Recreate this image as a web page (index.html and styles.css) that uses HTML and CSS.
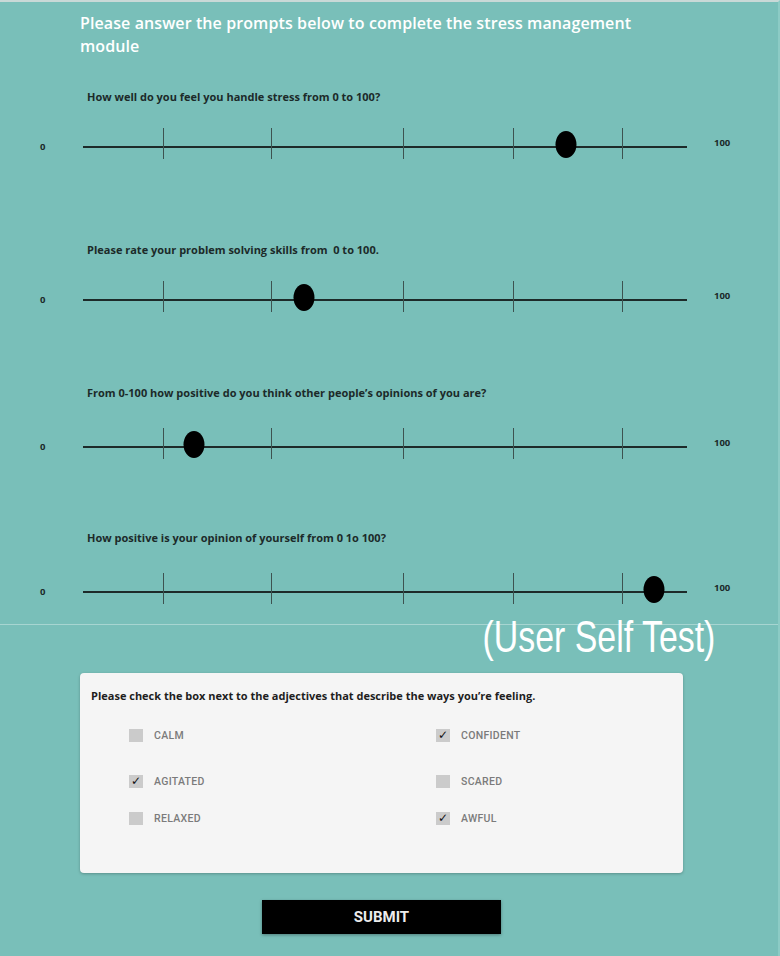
FILE: index.html
```html
<!DOCTYPE html>
<html lang="en">
<head>
<meta charset="utf-8">
<title>Stress Management Module</title>
<link rel="stylesheet" href="styles.css">
</head>
<body>
<main class="page">
  <h1 class="intro">Please answer the prompts below to complete the stress management module</h1>

  <section class="question q1">
    <p class="prompt">How well do you feel you handle stress from 0 to 100?</p>
    <div class="scale">
      <span class="min">0</span>
      <div class="track">
        <span class="tick t1"></span><span class="tick t2"></span><span class="tick t3"></span><span class="tick t4"></span><span class="tick t5"></span>
        <span class="thumb" style="left: 80%"></span>
      </div>
      <span class="max">100</span>
    </div>
  </section>

  <section class="question q2">
    <p class="prompt">Please rate your problem solving skills from &nbsp;0 to 100.</p>
    <div class="scale">
      <span class="min">0</span>
      <div class="track">
        <span class="tick t1"></span><span class="tick t2"></span><span class="tick t3"></span><span class="tick t4"></span><span class="tick t5"></span>
        <span class="thumb" style="left: 36.6%"></span>
      </div>
      <span class="max">100</span>
    </div>
  </section>

  <section class="question q3">
    <p class="prompt">From 0-100 how positive do you think other people’s opinions of you are?</p>
    <div class="scale">
      <span class="min">0</span>
      <div class="track">
        <span class="tick t1"></span><span class="tick t2"></span><span class="tick t3"></span><span class="tick t4"></span><span class="tick t5"></span>
        <span class="thumb" style="left: 18.4%"></span>
      </div>
      <span class="max">100</span>
    </div>
  </section>

  <section class="question q4">
    <p class="prompt">How positive is your opinion of yourself from 0 1o 100?</p>
    <div class="scale">
      <span class="min">0</span>
      <div class="track">
        <span class="tick t1"></span><span class="tick t2"></span><span class="tick t3"></span><span class="tick t4"></span><span class="tick t5"></span>
        <span class="thumb" style="left: 94.5%"></span>
      </div>
      <span class="max">100</span>
    </div>
  </section>

  <section class="lower">
    <div class="selftest"><span class="selftest-text">(User Self Test)</span></div>

    <div class="card">
      <p class="card-title">Please check the box next to the adjectives that describe the ways you’re feeling.</p>
      <div class="options">
        <div class="option"><span class="box"></span><span class="label">CALM</span></div>
        <div class="option"><span class="box checked">✓</span><span class="label">CONFIDENT</span></div>
        <div class="option"><span class="box checked">✓</span><span class="label">AGITATED</span></div>
        <div class="option"><span class="box"></span><span class="label">SCARED</span></div>
        <div class="option"><span class="box"></span><span class="label">RELAXED</span></div>
        <div class="option"><span class="box checked">✓</span><span class="label">AWFUL</span></div>
      </div>
    </div>

    <button class="submit" type="button">SUBMIT</button>
  </section>
</main>
</body>
</html>
```

FILE: styles.css
```css
html, body {
  margin: 0;
  padding: 0;
}

body {
  background: #79bfb9;
  border-top: 2px solid #c9d9d7;
  border-right: 2px solid #8ccbc5;
  box-sizing: border-box;
  height: 956px;
  overflow: hidden;
  font-family: "Open Sans", "Liberation Sans", sans-serif;
}

.page {
  padding-top: 10px;
}

.intro {
  margin: 0 0 0 80px;
  width: 560px;
  color: #ffffff;
  font-size: 16px;
  font-weight: 600;
  line-height: 23px;
  letter-spacing: 0.1px;
}

.question {
  margin: 0;
}

.prompt {
  margin: 0;
  padding-left: 87px;
  font-size: 11px;
  font-weight: 700;
  line-height: 14px;
  color: #1c2a29;
  letter-spacing: 0;
}

.q1 { margin-top: 32px; }
.q2 { margin-top: 79px; }
.q3 { margin-top: 69px; }
.q4 { margin-top: 67px; }

.q1 .scale, .q2 .scale { margin-top: 24px; }
.q3 .scale, .q4 .scale { margin-top: 28px; }

.scale {
  display: flex;
  align-items: center;
  height: 36px;
}

.min {
  box-sizing: border-box;
  width: 83px;
  padding-left: 40px;
  font-size: 9.5px;
  font-weight: 700;
  color: #1c2a29;
}

.max {
  margin-left: 27px;
  margin-bottom: 7px;
  font-size: 9.5px;
  font-weight: 700;
  color: #1c2a29;
}

.track {
  position: relative;
  width: 604px;
  height: 36px;
}

.track::before {
  content: "";
  position: absolute;
  left: 0;
  right: 0;
  top: 18px;
  height: 2px;
  background: #1d2a29;
}

.tick {
  position: absolute;
  top: 0;
  width: 1px;
  height: 31px;
  background: #3d5250;
}

.t1 { left: 80px; }
.t2 { left: 188px; }
.t3 { left: 320px; }
.t4 { left: 430px; }
.t5 { left: 539px; }

.thumb {
  position: absolute;
  top: 3px;
  width: 21px;
  height: 27px;
  border-radius: 50%;
  background: #000;
  transform: translateX(-50%);
}

.lower {
  margin-top: 15px;
  border-top: 1px solid rgba(255, 255, 255, 0.35);
}

.selftest {
  display: flex;
  justify-content: flex-end;
  padding-right: 63px;
  margin-top: -13px;
  height: 61px;
}

.selftest-text {
  display: inline-block;
  height: 50px;
  font-family: "Liberation Sans", "DejaVu Sans", sans-serif;
  font-size: 44px;
  line-height: 50px;
  color: #ffffff;
  transform: scaleX(0.77);
  transform-origin: right center;
  white-space: nowrap;
}

.card {
  box-sizing: border-box;
  margin: 0 0 0 80px;
  width: 603px;
  height: 200px;
  padding: 16px 11px 0;
  background: #f5f5f5;
  border-radius: 4px;
  box-shadow: 0 1px 3px rgba(0, 0, 0, 0.25);
}

.card-title {
  margin: 0;
  font-size: 11px;
  font-weight: 700;
  line-height: 14px;
  color: #1e1e1e;
  letter-spacing: 0;
}

.options {
  display: grid;
  grid-template-columns: 307px 1fr;
  grid-template-rows: 46px 37px 14px;
  margin: 25px 0 0 38px;
}

.option {
  display: flex;
  align-items: center;
  height: 14px;
}

.box {
  display: inline-flex;
  align-items: center;
  justify-content: center;
  width: 14px;
  height: 13px;
  background: #cbcbcb;
  font-family: "DejaVu Sans", sans-serif;
  font-size: 12px;
  line-height: 13px;
  color: #111;
}

.label {
  margin-left: 11px;
  font-family: Roboto, "Liberation Sans", sans-serif;
  font-size: 10.5px;
  font-weight: 500;
  color: #7b7b7b;
  letter-spacing: 0.3px;
}

.submit {
  display: block;
  margin: 27px 0 0 262px;
  width: 239px;
  height: 34px;
  border: 0;
  padding: 0;
  background: #000;
  color: #ececec;
  font-family: Roboto, "Liberation Sans", sans-serif;
  font-size: 15px;
  font-weight: 700;
  box-shadow: 0 1px 3px rgba(0, 0, 0, 0.35);
}
```
